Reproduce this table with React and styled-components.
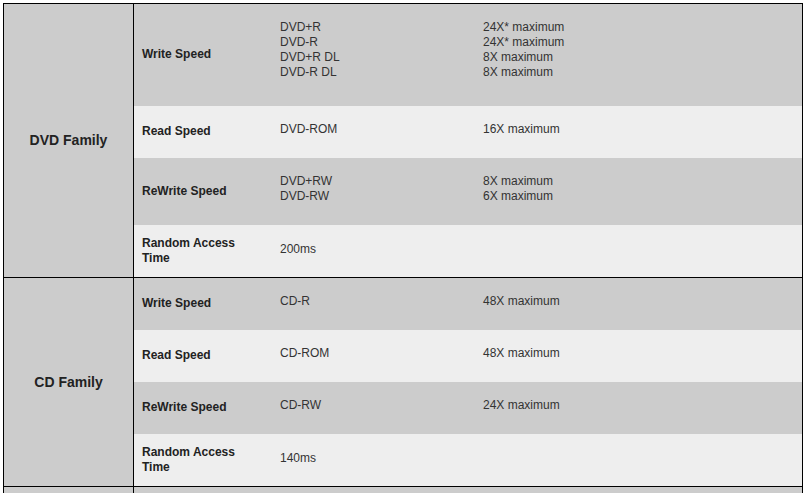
import React from 'react'
import styled, { createGlobalStyle } from 'styled-components'

// spec sheet: one block per disc family, each with its speed rows

const families = [
  {
    name: 'DVD Family',
    rows: [
      {
        label: 'Write Speed',
        height: 102,
        lift: 10,
        items: [
          ['DVD+R', '24X* maximum'],
          ['DVD-R', '24X* maximum'],
          ['DVD+R DL', '8X maximum'],
          ['DVD-R DL', '8X maximum'],
        ],
      },
      { label: 'Read Speed', height: 52, items: [['DVD-ROM', '16X maximum']] },
      {
        label: 'ReWrite Speed',
        height: 67,
        items: [
          ['DVD+RW', '8X maximum'],
          ['DVD-RW', '6X maximum'],
        ],
      },
      { label: 'Random Access Time', height: 52, lift: 4, items: [['200ms', '']] },
    ],
  },
  {
    name: 'CD Family',
    rows: [
      { label: 'Write Speed', height: 52, items: [['CD-R', '48X maximum']] },
      { label: 'Read Speed', height: 52, items: [['CD-ROM', '48X maximum']] },
      { label: 'ReWrite Speed', height: 52, items: [['CD-RW', '24X maximum']] },
      { label: 'Random Access Time', height: 52, lift: 4, items: [['140ms', '']] },
    ],
  },
  {
    name: 'DVD-RAM',
    rows: [
      { label: 'Write Speed', height: 52, items: [['DVD-RAM', '5X maximum']] },
      { label: 'Read Speed', height: 52, items: [['DVD-RAM', '5X maximum']] },
    ],
  },
]

export default function App() {
  return (
    <>
      <Global />
      <Sheet>
        {families.map((fam) => (
          <Family key={fam.name}>
            <FamilyName>{fam.name}</FamilyName>
            <Rows>
              {fam.rows.map((row, i) => (
                <Row key={row.label} $shade={i % 2 === 0} $h={row.height}>
                  <Label>{row.label}</Label>
                  <Values $lift={row.lift ?? 6}>
                    {row.items.map(([media, speed]) => (
                      <Line key={media}>
                        <Media>{media}</Media>
                        <Speed>{speed}</Speed>
                      </Line>
                    ))}
                  </Values>
                </Row>
              ))}
            </Rows>
          </Family>
        ))}
      </Sheet>
    </>
  )
}

const Global = createGlobalStyle`
  html, body {
    margin: 0;
    overflow: hidden;
    background: #fff;
  }
  body {
    font-family: "Liberation Sans", Arial, sans-serif;
    color: #333;
  }
`

const Sheet = styled.div`
  box-sizing: border-box;
  width: 800px;
  margin: 3px 0 0 3px;
  border: 1px solid #000;
  border-bottom: none;
`

const Family = styled.div`
  display: flex;
  border-bottom: 1px solid #000;
`

const FamilyName = styled.div`
  width: 129px;
  flex-shrink: 0;
  display: flex;
  align-items: center;
  justify-content: center;
  padding-bottom: 1px;
  background: #ccc;
  border-right: 1px solid #000;
  font-size: 14px;
  font-weight: bold;
  color: #222;
`

const Rows = styled.div`
  flex: 1;
  display: flex;
  flex-direction: column;
`

const Row = styled.div`
  display: flex;
  align-items: center;
  height: ${(p) => p.$h}px;
  background: ${(p) => (p.$shade ? '#ccc' : '#eee')};
`

const Label = styled.div`
  box-sizing: border-box;
  width: 137px;
  padding: 0 30px 1px 8px;
  font-size: 12px;
  line-height: 15px;
  font-weight: bold;
  color: #222;
`

const Values = styled.div`
  flex: 1;
  padding-bottom: ${(p) => p.$lift}px;
  font-size: 12px;
  line-height: 15px;
`

const Line = styled.div`
  display: flex;
`

const Media = styled.div`
  box-sizing: border-box;
  width: 204px;
  padding-left: 9px;
`

const Speed = styled.div`
  padding-left: 8px;
`
